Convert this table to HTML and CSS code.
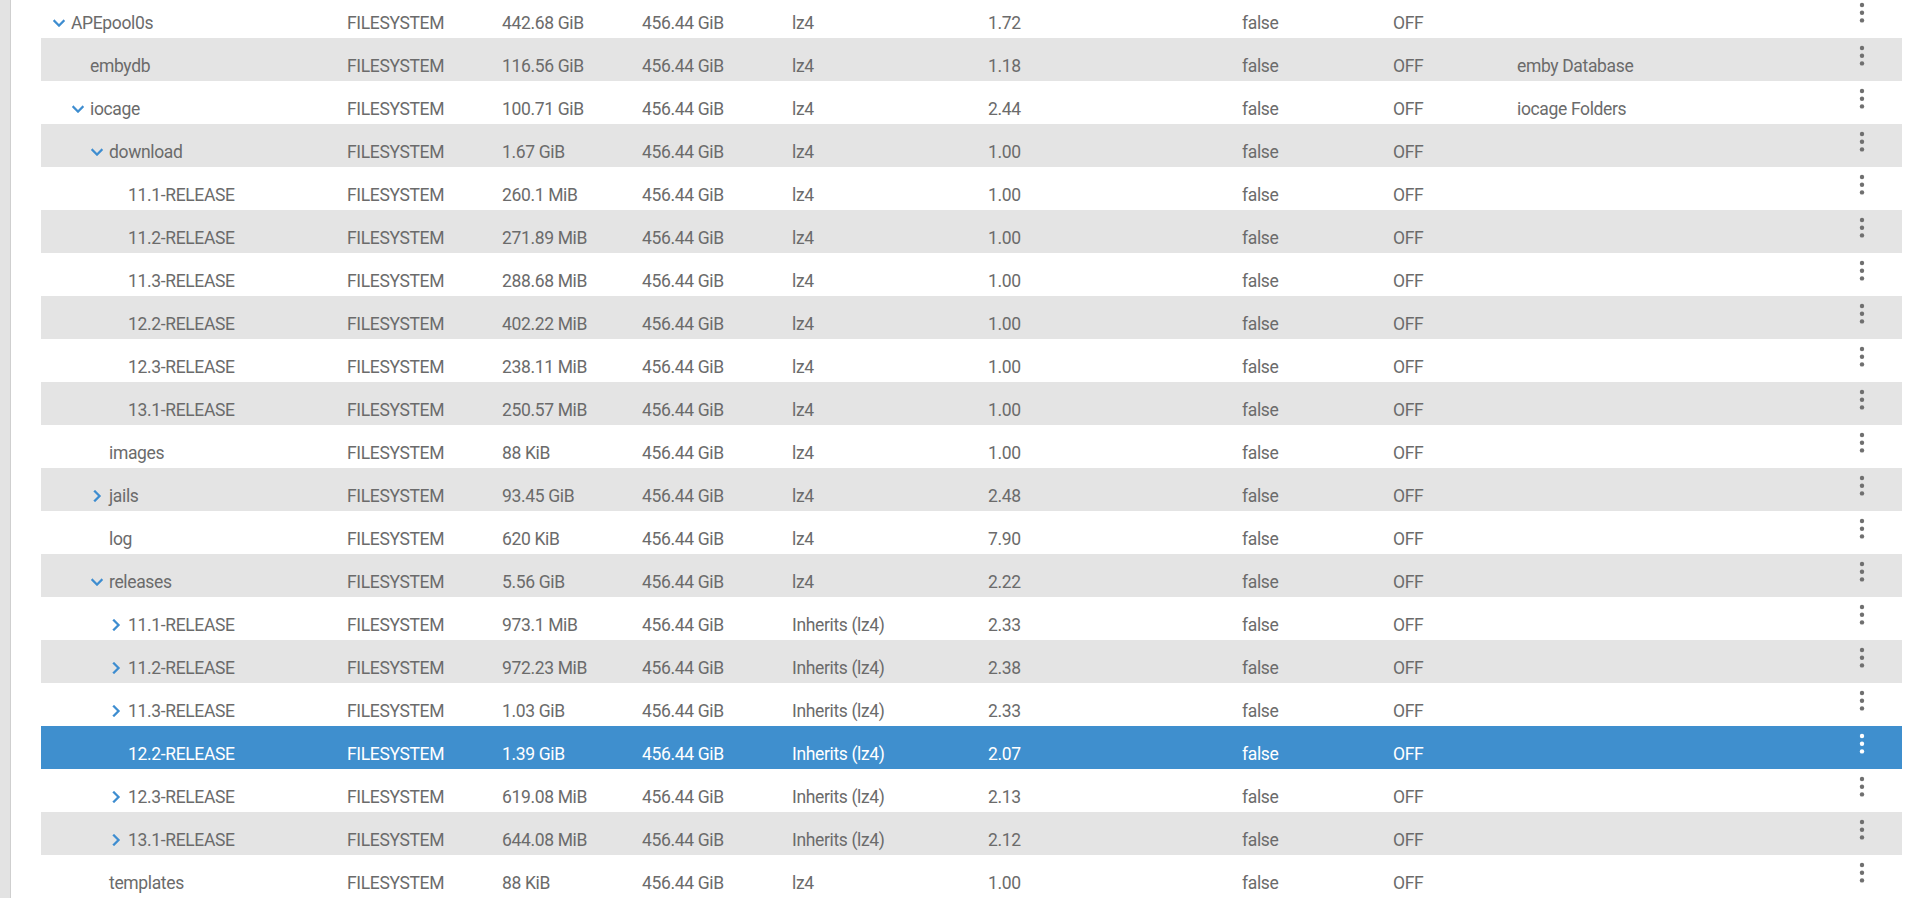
FILE: index.html
```html
<!DOCTYPE html>
<html>
<head>
<meta charset="utf-8">
<link rel="stylesheet" href="styles.css">
</head>
<body>
<div class="strip"></div>
<main class="main">
  <div class="table">
    <div class="row"><div class="name l0"><svg class="chev" viewBox="0 0 24 24"><path d="M7.41 8.59L12 13.170l4.59-4.58L18 10l-6 6-6-6 1.41-1.41z"/></svg><span>APEpool0s</span></div><div>FILESYSTEM</div><div>442.68 GiB</div><div>456.44 GiB</div><div>lz4</div><div>1.72</div><div>false</div><div>OFF</div><div></div><div class="act"><svg viewBox="0 0 6 26"><circle cx="3" cy="5" r="2.2"/><circle cx="3" cy="12.7" r="2.2"/><circle cx="3" cy="20.4" r="2.2"/></svg></div></div>
    <div class="row alt"><div class="name l1"><i class="sp"></i><span>embydb</span></div><div>FILESYSTEM</div><div>116.56 GiB</div><div>456.44 GiB</div><div>lz4</div><div>1.18</div><div>false</div><div>OFF</div><div>emby Database</div><div class="act"><svg viewBox="0 0 6 26"><circle cx="3" cy="5" r="2.2"/><circle cx="3" cy="12.7" r="2.2"/><circle cx="3" cy="20.4" r="2.2"/></svg></div></div>
    <div class="row"><div class="name l1"><svg class="chev" viewBox="0 0 24 24"><path d="M7.41 8.59L12 13.17l4.59-4.58L18 10l-6 6-6-6 1.41-1.41z"/></svg><span>iocage</span></div><div>FILESYSTEM</div><div>100.71 GiB</div><div>456.44 GiB</div><div>lz4</div><div>2.44</div><div>false</div><div>OFF</div><div>iocage Folders</div><div class="act"><svg viewBox="0 0 6 26"><circle cx="3" cy="5" r="2.2"/><circle cx="3" cy="12.7" r="2.2"/><circle cx="3" cy="20.4" r="2.2"/></svg></div></div>
    <div class="row alt"><div class="name l2"><svg class="chev" viewBox="0 0 24 24"><path d="M7.41 8.59L12 13.17l4.59-4.58L18 10l-6 6-6-6 1.41-1.41z"/></svg><span>download</span></div><div>FILESYSTEM</div><div>1.67 GiB</div><div>456.44 GiB</div><div>lz4</div><div>1.00</div><div>false</div><div>OFF</div><div></div><div class="act"><svg viewBox="0 0 6 26"><circle cx="3" cy="5" r="2.2"/><circle cx="3" cy="12.7" r="2.2"/><circle cx="3" cy="20.4" r="2.2"/></svg></div></div>
    <div class="row"><div class="name l3"><i class="sp"></i><span>11.1-RELEASE</span></div><div>FILESYSTEM</div><div>260.1 MiB</div><div>456.44 GiB</div><div>lz4</div><div>1.00</div><div>false</div><div>OFF</div><div></div><div class="act"><svg viewBox="0 0 6 26"><circle cx="3" cy="5" r="2.2"/><circle cx="3" cy="12.7" r="2.2"/><circle cx="3" cy="20.4" r="2.2"/></svg></div></div>
    <div class="row alt"><div class="name l3"><i class="sp"></i><span>11.2-RELEASE</span></div><div>FILESYSTEM</div><div>271.89 MiB</div><div>456.44 GiB</div><div>lz4</div><div>1.00</div><div>false</div><div>OFF</div><div></div><div class="act"><svg viewBox="0 0 6 26"><circle cx="3" cy="5" r="2.2"/><circle cx="3" cy="12.7" r="2.2"/><circle cx="3" cy="20.4" r="2.2"/></svg></div></div>
    <div class="row"><div class="name l3"><i class="sp"></i><span>11.3-RELEASE</span></div><div>FILESYSTEM</div><div>288.68 MiB</div><div>456.44 GiB</div><div>lz4</div><div>1.00</div><div>false</div><div>OFF</div><div></div><div class="act"><svg viewBox="0 0 6 26"><circle cx="3" cy="5" r="2.2"/><circle cx="3" cy="12.7" r="2.2"/><circle cx="3" cy="20.4" r="2.2"/></svg></div></div>
    <div class="row alt"><div class="name l3"><i class="sp"></i><span>12.2-RELEASE</span></div><div>FILESYSTEM</div><div>402.22 MiB</div><div>456.44 GiB</div><div>lz4</div><div>1.00</div><div>false</div><div>OFF</div><div></div><div class="act"><svg viewBox="0 0 6 26"><circle cx="3" cy="5" r="2.2"/><circle cx="3" cy="12.7" r="2.2"/><circle cx="3" cy="20.4" r="2.2"/></svg></div></div>
    <div class="row"><div class="name l3"><i class="sp"></i><span>12.3-RELEASE</span></div><div>FILESYSTEM</div><div>238.11 MiB</div><div>456.44 GiB</div><div>lz4</div><div>1.00</div><div>false</div><div>OFF</div><div></div><div class="act"><svg viewBox="0 0 6 26"><circle cx="3" cy="5" r="2.2"/><circle cx="3" cy="12.7" r="2.2"/><circle cx="3" cy="20.4" r="2.2"/></svg></div></div>
    <div class="row alt"><div class="name l3"><i class="sp"></i><span>13.1-RELEASE</span></div><div>FILESYSTEM</div><div>250.57 MiB</div><div>456.44 GiB</div><div>lz4</div><div>1.00</div><div>false</div><div>OFF</div><div></div><div class="act"><svg viewBox="0 0 6 26"><circle cx="3" cy="5" r="2.2"/><circle cx="3" cy="12.7" r="2.2"/><circle cx="3" cy="20.4" r="2.2"/></svg></div></div>
    <div class="row"><div class="name l2"><i class="sp"></i><span>images</span></div><div>FILESYSTEM</div><div>88 KiB</div><div>456.44 GiB</div><div>lz4</div><div>1.00</div><div>false</div><div>OFF</div><div></div><div class="act"><svg viewBox="0 0 6 26"><circle cx="3" cy="5" r="2.2"/><circle cx="3" cy="12.7" r="2.2"/><circle cx="3" cy="20.4" r="2.2"/></svg></div></div>
    <div class="row alt"><div class="name l2"><svg class="chev" viewBox="0 0 24 24"><path d="M8.59 16.59L13.17 12 8.59 7.41 10 6l6 6-6 6-1.41-1.41z"/></svg><span>jails</span></div><div>FILESYSTEM</div><div>93.45 GiB</div><div>456.44 GiB</div><div>lz4</div><div>2.48</div><div>false</div><div>OFF</div><div></div><div class="act"><svg viewBox="0 0 6 26"><circle cx="3" cy="5" r="2.2"/><circle cx="3" cy="12.7" r="2.2"/><circle cx="3" cy="20.4" r="2.2"/></svg></div></div>
    <div class="row"><div class="name l2"><i class="sp"></i><span>log</span></div><div>FILESYSTEM</div><div>620 KiB</div><div>456.44 GiB</div><div>lz4</div><div>7.90</div><div>false</div><div>OFF</div><div></div><div class="act"><svg viewBox="0 0 6 26"><circle cx="3" cy="5" r="2.2"/><circle cx="3" cy="12.7" r="2.2"/><circle cx="3" cy="20.4" r="2.2"/></svg></div></div>
    <div class="row alt"><div class="name l2"><svg class="chev" viewBox="0 0 24 24"><path d="M7.41 8.59L12 13.17l4.59-4.58L18 10l-6 6-6-6 1.41-1.41z"/></svg><span>releases</span></div><div>FILESYSTEM</div><div>5.56 GiB</div><div>456.44 GiB</div><div>lz4</div><div>2.22</div><div>false</div><div>OFF</div><div></div><div class="act"><svg viewBox="0 0 6 26"><circle cx="3" cy="5" r="2.2"/><circle cx="3" cy="12.7" r="2.2"/><circle cx="3" cy="20.4" r="2.2"/></svg></div></div>
    <div class="row"><div class="name l3"><svg class="chev" viewBox="0 0 24 24"><path d="M8.59 16.59L13.17 12 8.59 7.41 10 6l6 6-6 6-1.41-1.41z"/></svg><span>11.1-RELEASE</span></div><div>FILESYSTEM</div><div>973.1 MiB</div><div>456.44 GiB</div><div>Inherits (lz4)</div><div>2.33</div><div>false</div><div>OFF</div><div></div><div class="act"><svg viewBox="0 0 6 26"><circle cx="3" cy="5" r="2.2"/><circle cx="3" cy="12.7" r="2.2"/><circle cx="3" cy="20.4" r="2.2"/></svg></div></div>
    <div class="row alt"><div class="name l3"><svg class="chev" viewBox="0 0 24 24"><path d="M8.59 16.59L13.17 12 8.59 7.41 10 6l6 6-6 6-1.41-1.41z"/></svg><span>11.2-RELEASE</span></div><div>FILESYSTEM</div><div>972.23 MiB</div><div>456.44 GiB</div><div>Inherits (lz4)</div><div>2.38</div><div>false</div><div>OFF</div><div></div><div class="act"><svg viewBox="0 0 6 26"><circle cx="3" cy="5" r="2.2"/><circle cx="3" cy="12.7" r="2.2"/><circle cx="3" cy="20.4" r="2.2"/></svg></div></div>
    <div class="row"><div class="name l3"><svg class="chev" viewBox="0 0 24 24"><path d="M8.59 16.59L13.17 12 8.59 7.41 10 6l6 6-6 6-1.41-1.41z"/></svg><span>11.3-RELEASE</span></div><div>FILESYSTEM</div><div>1.03 GiB</div><div>456.44 GiB</div><div>Inherits (lz4)</div><div>2.33</div><div>false</div><div>OFF</div><div></div><div class="act"><svg viewBox="0 0 6 26"><circle cx="3" cy="5" r="2.2"/><circle cx="3" cy="12.7" r="2.2"/><circle cx="3" cy="20.4" r="2.2"/></svg></div></div>
    <div class="row sel"><div class="name l3"><i class="sp"></i><span>12.2-RELEASE</span></div><div>FILESYSTEM</div><div>1.39 GiB</div><div>456.44 GiB</div><div>Inherits (lz4)</div><div>2.07</div><div>false</div><div>OFF</div><div></div><div class="act"><svg viewBox="0 0 6 26"><circle cx="3" cy="5" r="2.2"/><circle cx="3" cy="12.7" r="2.2"/><circle cx="3" cy="20.4" r="2.2"/></svg></div></div>
    <div class="row"><div class="name l3"><svg class="chev" viewBox="0 0 24 24"><path d="M8.59 16.59L13.17 12 8.59 7.41 10 6l6 6-6 6-1.41-1.41z"/></svg><span>12.3-RELEASE</span></div><div>FILESYSTEM</div><div>619.08 MiB</div><div>456.44 GiB</div><div>Inherits (lz4)</div><div>2.13</div><div>false</div><div>OFF</div><div></div><div class="act"><svg viewBox="0 0 6 26"><circle cx="3" cy="5" r="2.2"/><circle cx="3" cy="12.7" r="2.2"/><circle cx="3" cy="20.4" r="2.2"/></svg></div></div>
    <div class="row alt"><div class="name l3"><svg class="chev" viewBox="0 0 24 24"><path d="M8.59 16.59L13.17 12 8.59 7.41 10 6l6 6-6 6-1.41-1.41z"/></svg><span>13.1-RELEASE</span></div><div>FILESYSTEM</div><div>644.08 MiB</div><div>456.44 GiB</div><div>Inherits (lz4)</div><div>2.12</div><div>false</div><div>OFF</div><div></div><div class="act"><svg viewBox="0 0 6 26"><circle cx="3" cy="5" r="2.2"/><circle cx="3" cy="12.7" r="2.2"/><circle cx="3" cy="20.4" r="2.2"/></svg></div></div>
    <div class="row"><div class="name l2"><i class="sp"></i><span>templates</span></div><div>FILESYSTEM</div><div>88 KiB</div><div>456.44 GiB</div><div>lz4</div><div>1.00</div><div>false</div><div>OFF</div><div></div><div class="act"><svg viewBox="0 0 6 26"><circle cx="3" cy="5" r="2.2"/><circle cx="3" cy="12.7" r="2.2"/><circle cx="3" cy="20.4" r="2.2"/></svg></div></div>
  </div>
</main>
</body>
</html>
```
FILE: styles.css
```css
html, body {
  margin: 0;
  padding: 0;
  height: 100%;
  overflow: hidden;
  background: #ffffff;
}
body {
  display: flex;
  font-family: Roboto, "Liberation Sans", sans-serif;
  font-size: 17.5px;
  letter-spacing: -0.35px;
  color: #6b6b6b;
}
.strip {
  width: 10px;
  flex: none;
  background: #e3e3e3;
  border-right: 1px solid #cfcfcf;
}
.main {
  flex: 1;
  padding: 0 18px 0 30px;
  min-width: 0;
}
.table {
  margin-top: -5px;
  display: flex;
  flex-direction: column;
}
.row {
  display: grid;
  grid-template-columns: 306px 155px 140px 150px 196px 254px 151px 124px 1fr 62px;
  height: 43px;
  align-items: start;
  background: #ffffff;
}
.row.alt {
  background: #e4e4e4;
}
.row.sel {
  background: #3f8fce;
  color: #ffffff;
}
.row > div {
  padding-top: 15.5px;
  line-height: 24px;
  white-space: nowrap;
}
.name {
  display: flex;
  align-items: center;
}
.name.l0 { padding-left: 6px; }
.name.l1 { padding-left: 25px; }
.name.l2 { padding-left: 44px; }
.name.l3 { padding-left: 63px; }
.chev, .sp {
  width: 24px;
  height: 24px;
  flex: none;
  display: block;
}
.chev path {
  fill: #3d8dd0;
  stroke: #3d8dd0;
  stroke-width: 0.3;
}
.row > div.act {
  padding-top: 5px;
  padding-left: 19px;
  line-height: 0;
}
.act svg {
  width: 6px;
  height: 26px;
  display: block;
}
.act circle {
  fill: #6f6f6f;
}
.row.sel .act circle {
  fill: #ffffff;
}
```
